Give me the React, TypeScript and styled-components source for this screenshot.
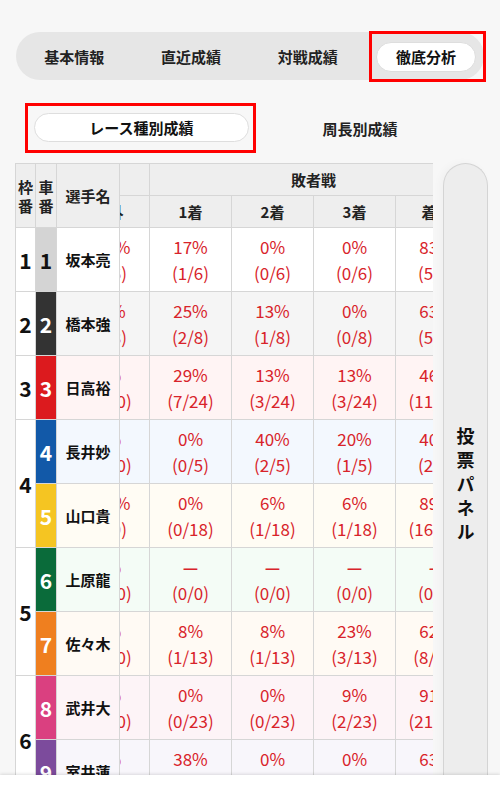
import { FC, useLayoutEffect, useRef } from 'react';
import styled, { createGlobalStyle } from 'styled-components';

const GlobalStyle = createGlobalStyle`
    body {
        margin: 0;
        background: #f7f7f7;
        font-family: "Noto Sans CJK JP", "Noto Sans", sans-serif;
        color: #1a1a1a;
    }
`;

const Page = styled.div`
    height: 787px;
    display: flex;
    flex-direction: column;
`;

const Main = styled.div`
    flex: 1;
    overflow: hidden;
    padding-top: 32px;
`;

const Footer = styled.div`
    height: 12px;
    background: #fff;
    box-shadow: 0 -1px 3px rgba(0, 0, 0, 0.12);
`;

const TabBar = styled.div`
    margin: 0 16px;
    height: 48px;
    border-radius: 24px;
    background: #e6e6e6;
    display: flex;
    align-items: center;
`;

const Tab = styled.div`
    flex: 1;
    text-align: center;
    font-size: 15px;
    font-weight: 700;
    color: #222;
`;

// red annotation frame around the selected item
const Marked = styled.div<{ $pad: string }>`
    border: 3px solid #f00;
    padding: ${(p) => p.$pad};
    display: flex;
    align-items: stretch;
`;

const TabSlot = styled.div`
    flex: 1;
    margin: 0 -2px 0 3px;
`;

const Pill = styled.div<{ $h: number }>`
    flex: 1;
    height: ${(p) => p.$h}px;
    border-radius: ${(p) => p.$h / 2}px;
    background: #fff;
    border: 1px solid #dedede;
    box-sizing: border-box;
    display: flex;
    align-items: center;
    justify-content: center;
    font-size: 15px;
    font-weight: 700;
    color: #111;
`;

const SubBar = styled.div`
    margin: 23px 24px 0 24px;
    height: 50px;
    display: grid;
    grid-template-columns: 1fr 1fr;
    align-items: center;
`;

const SubSlot = styled.div`
    margin: 0 -6px 0 1px;
`;

const SubTab = styled.div`
    text-align: center;
    padding-right: 6px;
    font-size: 15px;
    font-weight: 700;
    color: #222;
`;

const TableArea = styled.div`
    margin-top: 10px;
    display: flex;
    align-items: flex-start;
`;

const Frozen = styled.div`
    flex: none;
    margin-left: 15px;
    display: grid;
    grid-template-columns: 20px 21px 63px;
    grid-template-rows: 32px 32px repeat(9, 64px);
    border-top: 1px solid #d6d6d6;
    border-left: 1px solid #d6d6d6;
`;

const Scroller = styled.div`
    flex: none;
    width: 313px;
    overflow-x: auto;
    overflow-y: hidden;
    scrollbar-width: none;
    &::-webkit-scrollbar {
        display: none;
    }
`;

const Grid = styled.div`
    display: grid;
    grid-template-columns: repeat(8, 82px);
    grid-template-rows: 32px 32px repeat(9, 64px);
    border-top: 1px solid #d6d6d6;
    width: max-content;
`;

const Cell = styled.div`
    box-sizing: border-box;
    border-right: 1px solid #d6d6d6;
    border-bottom: 1px solid #d6d6d6;
    display: flex;
    align-items: center;
    justify-content: center;
    overflow: hidden;
`;

const HeadCell = styled(Cell)<{ $span?: number }>`
    background: #eeeeee;
    font-size: 15px;
    font-weight: 700;
    color: #222;
    white-space: nowrap;
    ${(p) => (p.$span ? `grid-column: span ${p.$span};` : '')}
`;

const FixedHead = styled(Cell)<{ $col: number }>`
    grid-column: ${(p) => p.$col};
    grid-row: 1 / 3;
    background: #eeeeee;
    font-size: 15px;
    font-weight: 700;
    line-height: 19px;
    color: #222;
    text-align: center;
    word-break: break-all;
`;

const FrameCell = styled(Cell)<{ $rows: number }>`
    grid-column: 1;
    grid-row: span ${(p) => p.$rows};
    background: #fff;
    font-size: 21px;
    font-weight: 700;
    color: #111;
`;

const CarCell = styled(Cell)<{ $bg: string; $ink: string }>`
    grid-column: 2;
    background: ${(p) => p.$bg};
    color: ${(p) => p.$ink};
    font-size: 21px;
    font-weight: 700;
`;

const NameCell = styled(Cell)<{ $tint: string }>`
    grid-column: 3;
    background: ${(p) => p.$tint};
    font-size: 15px;
    font-weight: 700;
    color: #111;
`;

const StatCell = styled(Cell)<{ $tint: string }>`
    flex-direction: column;
    background: ${(p) => p.$tint};
    color: #d8232a;
    font-size: 17px;
    line-height: 26px;
    white-space: nowrap;
`;

const Pct = styled.span<{ $dash: boolean }>`
    font-weight: ${(p) => (p.$dash ? 700 : 400)};
`;

const Panel = styled.div`
    flex: none;
    margin-left: 10px;
    width: 45px;
    height: 646px;
    box-sizing: border-box;
    border: 1px solid #d4d4d4;
    border-bottom: none;
    border-radius: 23px 23px 0 0;
    background: #ededed;
    box-shadow: -3px 0 8px rgba(0, 0, 0, 0.03);
    display: flex;
    align-items: center;
    justify-content: center;
`;

const PanelLabel = styled.span`
    writing-mode: vertical-rl;
    font-size: 18px;
    font-weight: 700;
    letter-spacing: 6px;
    color: #111;
`;

interface Racer {
    frame: number;
    car: number;
    name: string;
    tint: string;
    bg: string;
    ink: string;
    stats: string[];
}

const racers: Racer[] = [
    { frame: 1, car: 1, name: '坂本亮', tint: '#ffffff', bg: '#d4d4d4', ink: '#111',
        stats: ['0% (0/6)', '0% (0/6)', '0% (0/6)', '100% (6/6)', '17% (1/6)', '0% (0/6)', '0% (0/6)', '83% (5/6)'] },
    { frame: 2, car: 2, name: '橋本強', tint: '#f5f5f5', bg: '#333333', ink: '#fff',
        stats: ['0% (0/8)', '13% (1/8)', '0% (0/8)', '88% (7/8)', '25% (2/8)', '13% (1/8)', '0% (0/8)', '63% (5/8)'] },
    { frame: 3, car: 3, name: '日高裕', tint: '#fff4f4', bg: '#dc1a1e', ink: '#fff',
        stats: ['45% (9/20)', '30% (6/20)', '20% (4/20)', '5% (1/20)', '29% (7/24)', '13% (3/24)', '13% (3/24)', '46% (11/24)'] },
    { frame: 4, car: 4, name: '長井妙', tint: '#f3f8fe', bg: '#1259a8', ink: '#fff',
        stats: ['40% (4/10)', '30% (3/10)', '30% (3/10)', '0% (0/10)', '0% (0/5)', '40% (2/5)', '20% (1/5)', '40% (2/5)'] },
    { frame: 4, car: 5, name: '山口貴', tint: '#fffcf4', bg: '#f5c522', ink: '#fff',
        stats: ['0% (0/9)', '0% (0/9)', '0% (0/9)', '100% (9/9)', '0% (0/18)', '6% (1/18)', '6% (1/18)', '89% (16/18)'] },
    { frame: 5, car: 6, name: '上原龍', tint: '#f4fcf6', bg: '#0a6b3a', ink: '#fff',
        stats: ['60% (6/10)', '20% (2/10)', '20% (2/10)', '0% (0/10)', '— (0/0)', '— (0/0)', '— (0/0)', '— (0/0)'] },
    { frame: 5, car: 7, name: '佐々木', tint: '#fffaf4', bg: '#ef7f1f', ink: '#fff',
        stats: ['50% (10/20)', '25% (5/20)', '25% (5/20)', '0% (0/20)', '8% (1/13)', '8% (1/13)', '23% (3/13)', '62% (8/13)'] },
    { frame: 6, car: 8, name: '武井大', tint: '#fdf4f7', bg: '#da4080', ink: '#fff',
        stats: ['40% (8/20)', '35% (7/20)', '20% (4/20)', '5% (1/20)', '0% (0/23)', '0% (0/23)', '9% (2/23)', '91% (21/23)'] },
    { frame: 6, car: 9, name: '室井蓮', tint: '#f8f6fb', bg: '#7c4b9c', ink: '#fff',
        stats: ['30% (3/10)', '40% (4/10)', '30% (3/10)', '0% (0/10)', '38% (3/8)', '0% (0/8)', '0% (0/8)', '63% (5/8)'] },
];

const places = ['1着', '2着', '3着', '着外'];

const frameSpan = (i: number) => racers.filter((r) => r.frame === racers[i].frame).length;

export default function App() {
    const scrollRef = useRef<HTMLDivElement>(null);

    // table opens scrolled to the 敗者戦 block
    useLayoutEffect(() => {
        if (scrollRef.current) {
            scrollRef.current.scrollLeft = 298;
        }
    }, []);

    return (
        <Page>
            <GlobalStyle />
            <Main>
                <TabBar>
                    <Tab>基本情報</Tab>
                    <Tab>直近成績</Tab>
                    <Tab>対戦成績</Tab>
                    <TabSlot>
                        <Marked $pad="8px 7px 7px 4px">
                            <Pill $h={30}>徹底分析</Pill>
                        </Marked>
                    </TabSlot>
                </TabBar>

                <SubBar>
                    <SubSlot>
                        <Marked $pad="7px 4px 8px 6px">
                            <Pill $h={29}>レース種別成績</Pill>
                        </Marked>
                    </SubSlot>
                    <SubTab>周長別成績</SubTab>
                </SubBar>

                <TableArea>
                    <Frozen>
                        <FixedHead $col={1}>枠番</FixedHead>
                        <FixedHead $col={2}>車番</FixedHead>
                        <FixedHead $col={3}>選手名</FixedHead>
                        {racers.map((r, i) => (
                            <Row key={r.car} racer={r} first={i === 0 || racers[i - 1].frame !== r.frame} span={frameSpan(i)} />
                        ))}
                    </Frozen>

                    <Scroller ref={scrollRef}>
                        <Grid>
                            <HeadCell $span={4}>一般戦</HeadCell>
                            <HeadCell $span={4}>敗者戦</HeadCell>
                            {[...places, ...places].map((p, i) => (
                                <HeadCell key={i}>{p}</HeadCell>
                            ))}
                            {racers.map((r) =>
                                r.stats.map((s, j) => {
                                    const [pct, frac] = s.split(' ');
                                    return (
                                        <StatCell key={r.car + '-' + j} $tint={r.tint}>
                                            <Pct $dash={pct === '—'}>{pct}</Pct>
                                            <span>{frac}</span>
                                        </StatCell>
                                    );
                                })
                            )}
                        </Grid>
                    </Scroller>

                    <Panel>
                        <PanelLabel>投票パネル</PanelLabel>
                    </Panel>
                </TableArea>
            </Main>
            <Footer />
        </Page>
    );
}

const Row: FC<{ racer: Racer; first: boolean; span: number }> = ({ racer, first, span }) => (
    <>
        {first && <FrameCell $rows={span}>{racer.frame}</FrameCell>}
        <CarCell $bg={racer.bg} $ink={racer.ink}>{racer.car}</CarCell>
        <NameCell $tint={racer.tint}>{racer.name}</NameCell>
    </>
);
